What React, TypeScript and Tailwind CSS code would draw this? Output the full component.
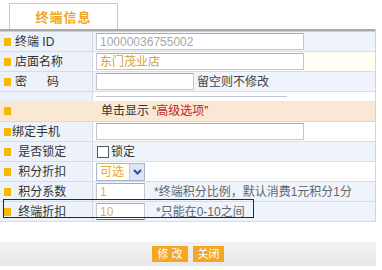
import React from 'react';

const font = { fontFamily: '"Liberation Sans", "Noto Sans CJK SC", sans-serif' };

const Bullet = () => <span className="inline-block w-[7px] h-[8px] bg-[#f6b800] shrink-0" />;

type RowProps = {
  label?: React.ReactNode;
  valueBg: string;
  children?: React.ReactNode;
  labelPad?: string;
};

const Row: React.FC<RowProps> = ({ label, valueBg, children, labelPad = 'pl-[4px]' }) => (
  <div className="flex h-[20px] border-b border-[#d6dce8]">
    <div className={`w-[93px] shrink-0 flex items-center gap-[4px] bg-[#ecf1fa] border-r border-[#d3d9e5] ${labelPad}`}>
      <Bullet />
      <span className="text-[12px] text-[#333] leading-[20px] whitespace-pre">{label}</span>
    </div>
    <div className={`flex-1 flex items-center pl-[3px] ${valueBg}`}>{children}</div>
  </div>
);

const Input: React.FC<{ w: string; value?: string; color?: string; extra?: string }> = ({ w, value = '', color = 'text-[#999]', extra = '' }) => (
  <div className={`${w} h-[17px] bg-white border border-[#c3c7cf] border-t-[#a9adb5] flex items-center pl-[3px] text-[12px] ${color} ${extra}`}>
    {value}
  </div>
);

export default function App() {
  return (
    <div className="w-[382px] h-[270px] bg-white overflow-hidden" style={font}>
      <div className="pt-[3px] pl-[9px]">
        <div className="w-[109px] h-[26px] border border-b-0 border-[#c8c8c8] bg-white flex items-center justify-center">
          <span className="text-[13px] font-bold text-[#f0a626] tracking-[1px]" style={{ fontFamily: '"Noto Sans CJK SC", sans-serif' }}>终端信息</span>
        </div>
      </div>
      <div className="relative w-[376px] border-r border-[#cfd4de]">
        <div className="h-[3px] bg-[#a9a9a9] border-b border-[#d0d0d0]" />
        <Row label="终端 ID" valueBg="bg-[#eef3fc]">
          <Input w="w-[208px]" value="10000036755002" color="text-[#a6a6a6]" />
        </Row>
        <Row label="店面名称" valueBg="bg-[#fffff3]">
          <Input w="w-[208px]" value="东门茂业店" color="text-[#d1a040]" />
        </Row>
        <Row label={'密      码'} valueBg="bg-[#eef3fc]">
          <Input w="w-[98px]" />
          <span className="ml-[3px] text-[12px] text-[#444]">留空则不修改</span>
        </Row>
        <div className="flex h-[9px]">
          <div className="w-[93px] shrink-0 bg-[#ecf1fa] border-r border-[#d3d9e5]" />
          <div className="flex-1 bg-white pl-[3px]">
            <div className="w-[191px] h-[5px] border-b border-[#c3c7cf]" />
          </div>
        </div>
        <div className="flex h-[21px] bg-[#fbe8d4] border-b border-[#e6d6c4] items-center">
          <div className="w-[93px] shrink-0 pl-[4px] flex items-center">
            <Bullet />
          </div>
          <span className="ml-[8px] text-[12px] text-[#333]">
            单击显示 “<span className="text-[#c8201c]">高级选项</span>”
          </span>
        </div>
        <Row label="绑定手机" valueBg="bg-white" labelPad="pl-[4px] !gap-[1px]">
          <Input w="w-[208px]" />
        </Row>
        <Row label=" 是否锁定" valueBg="bg-[#eef3fc]">
          <span className="w-[12px] h-[12px] bg-white border border-[#555] ml-[1px]" />
          <span className="ml-[2px] text-[12px] text-[#333]">锁定</span>
        </Row>
        <Row label=" 积分折扣" valueBg="bg-white">
          <div className="w-[49px] h-[18px] border border-[#a8b6cc] bg-[#fffff6] flex items-center">
            <span className="pl-[3px] flex-1 text-[12px] text-[#e2a83c]">可选</span>
            <span className="w-[15px] h-[16px] bg-[#dbe5f6] border-l border-[#b8c6de] flex items-center justify-center">
              <svg width="9" height="6" viewBox="0 0 9 6">
                <path d="M1 1 L4.5 4.5 L8 1" stroke="#2a4f9e" strokeWidth="2" fill="none" />
              </svg>
            </span>
          </div>
        </Row>
        <Row label=" 积分系数" valueBg="bg-[#eef3fc]">
          <Input w="w-[49px]" value="1" color="text-[#e0b058]" />
          <span className="ml-[9px] text-[12px] text-[#666]">*终端积分比例，默认消费1元积分1分</span>
        </Row>
        <Row label=" 终端折扣" valueBg="bg-[#eef3fc]">
          <Input w="w-[49px]" value="10" color="text-[#e0b058]" extra="border-b-[#4a62c8]" />
          <span className="ml-[11px] text-[12px] text-[#666]">*只能在0-10之间</span>
        </Row>
        <div className="absolute left-[3px] top-[170px] w-[251px] h-[19px] border border-[#1e1e7a] pointer-events-none" />
      </div>
      <div className="h-[20px]" />
      <div className="w-[376px] h-[24px] bg-gradient-to-b from-[#f2f2f2] to-[#e8e8e8] flex items-center justify-center gap-[5px]">
        <button className="w-[36px] h-[16px] bg-[#f5a623] text-white text-[11px] leading-[16px]">修 改</button>
        <button className="w-[31px] h-[16px] bg-[#f5a623] text-white text-[11px] leading-[16px]">关闭</button>
      </div>
    </div>
  );
}
